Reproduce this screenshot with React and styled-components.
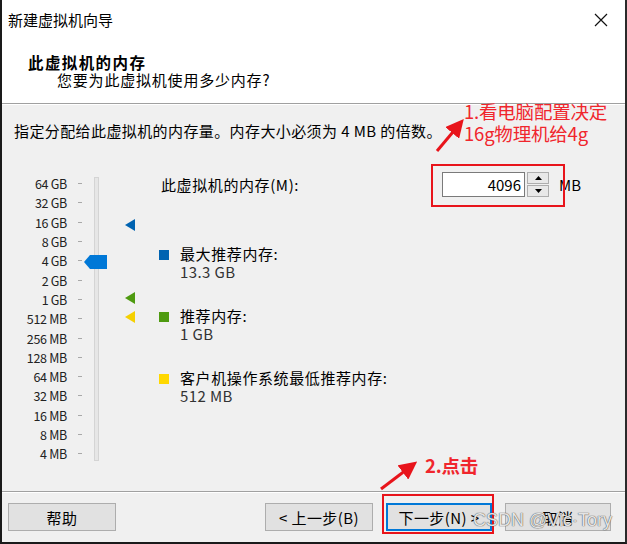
import React from "react";
import styled, { createGlobalStyle } from "styled-components";

const GlobalStyle = createGlobalStyle`
  html, body {
    margin: 0;
    padding: 0;
    background: #ffffff;
  }
  * {
    box-sizing: border-box;
  }
  body {
    font-family: "Noto Sans CJK SC", "Noto Sans", sans-serif;
    color: #000;
  }
`;

const ROW_H = 19.3;
const LABELS = [
  "64 GB", "32 GB", "16 GB", "8 GB", "4 GB", "2 GB", "1 GB",
  "512 MB", "256 MB", "128 MB", "64 MB", "32 MB", "16 MB", "8 MB", "4 MB",
];

const MARKERS = [
  { color: "#0063b1", y: 51 },
  { color: "#4e9a10", y: 124 },
  { color: "#f5d000", y: 143 },
];

const LEGEND = [
  { color: "#0063b1", title: "最大推荐内存:", value: "13.3 GB" },
  { color: "#4e9a10", title: "推荐内存:", value: "1 GB" },
  { color: "#ffd800", title: "客户机操作系统最低推荐内存:", value: "512 MB" },
];

const App = () => {
  return (
    <>
      <GlobalStyle />
      <Window>
        <TitleBar>
          <WindowTitle>新建虚拟机向导</WindowTitle>
          <CloseButton>
            <svg width="14" height="14" viewBox="0 0 14 14">
              <path d="M1 1 L13 13 M13 1 L1 13" stroke="#111" strokeWidth="1.2" fill="none" />
            </svg>
          </CloseButton>
        </TitleBar>

        <Header>
          <HeaderTitle>此虚拟机的内存</HeaderTitle>
          <HeaderSub>您要为此虚拟机使用多少内存?</HeaderSub>
        </Header>
        <Rule />

        <Body>
          <Description>指定分配给此虚拟机的内存量。内存大小必须为 4 MB 的倍数。</Description>
          <Main>
            <Slider>
              <Scale>
                {LABELS.map((l) => (
                  <ScaleRow key={l}>
                    <ScaleLabel>{l}</ScaleLabel>
                    <Tick />
                  </ScaleRow>
                ))}
              </Scale>
              <Track>
                <Thumb viewBox="0 0 23 14" width="23" height="14">
                  <polygon points="0,7 6,0 23,0 23,14 6,14" fill="#0078d7" />
                </Thumb>
              </Track>
              <MarkerLane>
                {MARKERS.map((m) => (
                  <Marker key={m.color} width="10" height="12" viewBox="0 0 10 12" style={{ top: m.y }}>
                    <polygon points="0,6 10,0 10,12" fill={m.color} />
                  </Marker>
                ))}
              </MarkerLane>
            </Slider>

            <Panel>
              <MemoryRow>
                <MemoryLabel>此虚拟机的内存(M):</MemoryLabel>
                <NumberInput>4096</NumberInput>
                <Spinner>
                  <SpinButton>
                    <svg width="7" height="4" viewBox="0 0 7 4">
                      <polygon points="0,4 3.5,0 7,4" fill="#000" />
                    </svg>
                  </SpinButton>
                  <SpinButton>
                    <svg width="7" height="4" viewBox="0 0 7 4">
                      <polygon points="0,0 7,0 3.5,4" fill="#000" />
                    </svg>
                  </SpinButton>
                </Spinner>
                <Unit>MB</Unit>
              </MemoryRow>

              <Legend>
                {LEGEND.map((g) => (
                  <LegendItem key={g.title}>
                    <Swatch color={g.color} />
                    <LegendText>
                      <div>{g.title}</div>
                      <LegendValue>{g.value}</LegendValue>
                    </LegendText>
                  </LegendItem>
                ))}
              </Legend>
            </Panel>
          </Main>
        </Body>

        <Rule />
        <Footer>
          <Button>帮助</Button>
          <Spacer />
          <ButtonGroup>
            <Button>&lt; 上一步(B)</Button>
            <Button primary>下一步(N) &gt;</Button>
            <Button>取消</Button>
          </ButtonGroup>
        </Footer>

        <RedBox style={{ left: 429, top: 164, width: 134, height: 43 }} />
        <RedBox style={{ left: 380, top: 494, width: 112, height: 40 }} />

        <Arrow width="627" height="544" viewBox="0 0 627 544">
          <defs>
            <marker id="head" markerWidth="6" markerHeight="6" refX="3" refY="3" orient="auto">
              <polygon points="0,0 6,3 0,6" fill="#e8141b" />
            </marker>
          </defs>
          <line x1="437" y1="151" x2="458" y2="126" stroke="#e8141b" strokeWidth="3" markerEnd="url(#head)" />
          <line x1="381" y1="489" x2="410" y2="467" stroke="#e8141b" strokeWidth="3" markerEnd="url(#head)" />
        </Arrow>

        <Note style={{ left: 462, top: 100 }}>
          1.看电脑配置决定
          <br />
          16g物理机给4g
        </Note>
        <Note bold style={{ left: 423, top: 454 }}>2.点击</Note>

        <Watermark>CSDN @Vic·Tory</Watermark>
      </Window>
    </>
  );
};

export default App;

const Window = styled.div`
  position: relative;
  width: 627px;
  height: 544px;
  display: flex;
  flex-direction: column;
  background: #f0f0f0;
  border-left: 2px solid #1a1a1a;
  border-right: 2px solid #2a2a2a;
  border-bottom: 2px solid #1a1a1a;
  overflow: hidden;
  font-size: 15px;
`;

const TitleBar = styled.div`
  height: 40px;
  flex: none;
  display: flex;
  align-items: center;
  justify-content: space-between;
  padding: 0 16px 0 6px;
  background: #fff;
`;

const WindowTitle = styled.div`
  font-size: 15px;
  line-height: 20px;
  color: #000;
`;

const CloseButton = styled.div`
  display: flex;
  align-items: center;
  justify-content: center;
  width: 16px;
  height: 16px;
`;

const Header = styled.div`
  height: 63px;
  flex: none;
  background: #fff;
  padding: 13px 0 0 26px;
`;

const HeaderTitle = styled.div`
  font-weight: bold;
  font-size: 15.5px;
  line-height: 18px;
  letter-spacing: 1.4px;
`;

const HeaderSub = styled.div`
  font-size: 15px;
  line-height: 18px;
  padding-left: 29px;
  letter-spacing: 0.8px;
`;

const Rule = styled.div`
  height: 2px;
  flex: none;
  border-top: 1px solid #a0a0a0;
  border-bottom: 1px solid #ffffff;
`;

const Body = styled.div`
  flex: 1;
  padding: 16px 0 0 12px;
`;

const Description = styled.div`
  line-height: 20px;
  letter-spacing: 0.4px;
  margin-bottom: 31px;
`;

const Main = styled.div`
  display: flex;
  margin-left: -12px;
`;

const Slider = styled.div`
  display: flex;
  padding-top: 2px;
  width: 157px;
  flex: none;
`;

const Scale = styled.div`
  display: flex;
  flex-direction: column;
`;

const ScaleRow = styled.div`
  height: ${ROW_H}px;
  display: flex;
  align-items: center;
`;

const ScaleLabel = styled.div`
  width: 65px;
  text-align: right;
  font-size: 12.5px;
  color: #222;
  letter-spacing: -0.3px;
`;

const Tick = styled.div`
  width: 4px;
  height: 1px;
  margin-left: 11px;
  background: #a8a8a8;
`;

const Track = styled.div`
  position: relative;
  width: 5px;
  height: 284px;
  margin: 3px 0 0 12px;
  background: #e6e6e6;
  border: 1px solid #d4d4d4;
`;

const Thumb = styled.svg`
  position: absolute;
  left: -11px;
  top: 77px;
`;

const MarkerLane = styled.div`
  position: relative;
  width: 30px;
  margin-left: 26px;
`;

const Marker = styled.svg`
  position: absolute;
  left: 0;
  margin-top: -6px;
`;

const Panel = styled.div`
  display: flex;
  flex-direction: column;
`;

const MemoryRow = styled.div`
  display: flex;
  align-items: center;
  height: 25px;
`;

const MemoryLabel = styled.div`
  width: 283px;
  padding-left: 2px;
  letter-spacing: 0.6px;
`;

const NumberInput = styled.div`
  width: 83px;
  height: 25px;
  background: #fff;
  border: 1px solid #7a7a7a;
  text-align: right;
  padding-right: 3px;
  line-height: 23px;
  font-size: 15px;
`;

const Spinner = styled.div`
  width: 22px;
  height: 25px;
  margin-left: 2px;
  display: flex;
  flex-direction: column;
  gap: 1px;
`;

const SpinButton = styled.div`
  flex: 1;
  display: flex;
  align-items: center;
  justify-content: center;
  background: #e8e8e8;
  border: 1px solid #adadad;
`;

const Unit = styled.div`
  margin-left: 10px;
`;

const Legend = styled.div`
  display: flex;
  flex-direction: column;
  gap: 26px;
  margin-top: 48px;
`;

const LegendItem = styled.div`
  display: flex;
  line-height: 18px;
`;

const Swatch = styled.div`
  width: 10px;
  height: 10px;
  margin-top: 5px;
  background: ${(p) => p.color};
`;

const LegendText = styled.div`
  margin-left: 11px;
  letter-spacing: 0.6px;
`;

const LegendValue = styled.div`
  color: #333;
  letter-spacing: 0.4px;
`;

const Footer = styled.div`
  height: 49px;
  flex: none;
  display: flex;
  align-items: flex-start;
  padding: 10px 14px 0 6px;
`;

const Spacer = styled.div`
  flex: 1;
`;

const ButtonGroup = styled.div`
  display: flex;
  gap: 13px;
`;

const Button = styled.div`
  width: 106px;
  height: 28px;
  display: flex;
  align-items: center;
  justify-content: center;
  background: #e1e1e1;
  border: ${(p) => (p.primary ? "2px solid #0078d7" : "1px solid #adadad")};
  font-size: 15px;
  letter-spacing: 0.4px;
  &:first-child {
    width: 108px;
  }
`;

const RedBox = styled.div`
  position: absolute;
  border: 2px solid #e8141b;
  pointer-events: none;
`;

const Arrow = styled.svg`
  position: absolute;
  left: -2px;
  top: 0;
  pointer-events: none;
`;

const Note = styled.div`
  position: absolute;
  color: #f0262d;
  font-size: 18.5px;
  line-height: 22px;
  font-weight: ${(p) => (p.bold ? 700 : 400)};
  letter-spacing: -0.2px;
  white-space: nowrap;
`;

const Watermark = styled.div`
  position: absolute;
  left: 471px;
  top: 510px;
  font-family: "Liberation Sans", Arial, sans-serif;
  font-size: 18px;
  color: rgba(255, 255, 255, 0.85);
  text-shadow: 0 0 1px #555, 0 0 1px #555;
  white-space: nowrap;
`;
